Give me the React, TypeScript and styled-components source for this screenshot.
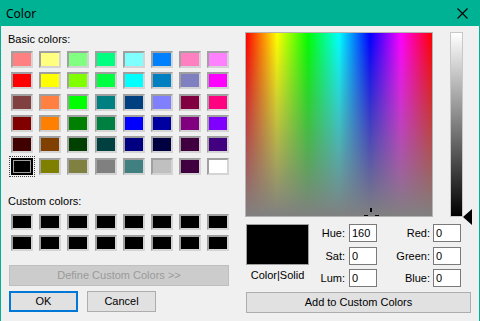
import React from 'react';
import styled, { createGlobalStyle } from 'styled-components';

const GlobalStyle = createGlobalStyle`
  html, body { margin: 0; padding: 0; background: #f0f0f0; }
  body { font-family: "Liberation Sans", Arial, sans-serif; font-size: 11px; color: #000; }
  * { box-sizing: border-box; }
`;

const basicColors = [
  '#FF8080', '#FFFF80', '#80FF80', '#00FF80', '#80FFFF', '#0080FF', '#FF80C0', '#FF80FF',
  '#FF0000', '#FFFF00', '#80FF00', '#00FF40', '#00FFFF', '#0080C0', '#8080C0', '#FF00FF',
  '#804040', '#FF8040', '#00FF00', '#008080', '#004080', '#8080FF', '#800040', '#FF0080',
  '#800000', '#FF8000', '#008000', '#008040', '#0000FF', '#0000A0', '#800080', '#8000FF',
  '#400000', '#804000', '#004000', '#004040', '#000080', '#000040', '#400040', '#400080',
  '#000000', '#808000', '#808040', '#808080', '#408080', '#C0C0C0', '#400040', '#FFFFFF',
];

const fields = [
  { label: 'Hue:', value: '160', label2: 'Red:', value2: '0' },
  { label: 'Sat:', value: '0', label2: 'Green:', value2: '0' },
  { label: 'Lum:', value: '0', label2: 'Blue:', value2: '0' },
];

const App: React.FC = () => {
  return (
    <>
      <GlobalStyle />
      <Window>
        <TitleBar>
          <Title>Color</Title>
          <CloseIcon width="11" height="11" viewBox="0 0 11 11">
            <path d="M0.5 0.5 L10.5 10.5 M10.5 0.5 L0.5 10.5" stroke="#000" strokeWidth="1.1" fill="none" />
          </CloseIcon>
        </TitleBar>
        <Body>
          <LeftPane>
            <SectionLabel>Basic colors:</SectionLabel>
            <BasicGrid>
              {basicColors.map((c, idx) => (
                <Swatch key={idx} $color={c} $selected={idx === 40} />
              ))}
            </BasicGrid>
            <SectionLabel $top={20}>Custom colors:</SectionLabel>
            <CustomGrid>
              {Array.from({ length: 16 }).map((_, idx) => (
                <Swatch key={idx} $color="#000000" />
              ))}
            </CustomGrid>
            <WideButton disabled>Define Custom Colors &gt;&gt;</WideButton>
            <ButtonRow>
              <Button $primary>OK</Button>
              <Button>Cancel</Button>
            </ButtonRow>
          </LeftPane>
          <RightPane>
            <TopRow>
              <Spectrum>
                <Cross width="20" height="20" viewBox="0 0 20 20">
                  <rect x="9" y="2" width="2" height="4" fill="#000" />
                  <rect x="3" y="9" width="4" height="2" fill="#000" />
                  <rect x="14" y="9" width="4" height="2" fill="#000" />
                </Cross>
              </Spectrum>
              <LumWrap>
                <LumBar />
                <Arrow width="9" height="16" viewBox="0 0 9 16">
                  <polygon points="0,8 9,0 9,16" fill="#000" />
                </Arrow>
              </LumWrap>
            </TopRow>
            <BottomRow>
              <SolidCol>
                <SolidBox />
                <SolidLabel>Color|Solid</SolidLabel>
              </SolidCol>
              <FieldGrid>
                {fields.map((f) => (
                  <React.Fragment key={f.label}>
                    <FieldLabel>{f.label}</FieldLabel>
                    <Field>{f.value}</Field>
                    <FieldLabel $pad={3}>{f.label2}</FieldLabel>
                    <Field>{f.value2}</Field>
                  </React.Fragment>
                ))}
              </FieldGrid>
            </BottomRow>
            <AddButton>Add to Custom Colors</AddButton>
          </RightPane>
        </Body>
      </Window>
    </>
  );
};

export default App;

const Window = styled.div`
  width: 480px;
  height: 321px;
  background: #f0f0f0;
  border: 1px solid #00b294;
  border-bottom: none;
  display: flex;
  flex-direction: column;
`;

const TitleBar = styled.div`
  height: 25px;
  background: #00b294;
  display: flex;
  align-items: center;
  justify-content: space-between;
  padding: 0 10px 0 5px;
`;

const Title = styled.div`
  font-family: "Noto Sans", "Open Sans", sans-serif;
  font-size: 12px;
  color: #000;
`;

const CloseIcon = styled.svg`
  display: block;
  margin-right: 1px;
`;

const Body = styled.div`
  display: flex;
  padding-left: 7px;
`;

const LeftPane = styled.div`
  width: 222px;
  display: flex;
  flex-direction: column;
  padding-top: 7px;
`;

const SectionLabel = styled.div<{ $top?: number }>`
  height: 13px;
  line-height: 13px;
  margin-top: ${(p) => p.$top ?? 0}px;
`;

const BasicGrid = styled.div`
  display: grid;
  grid-template-columns: repeat(8, 22px);
  grid-auto-rows: 17px;
  column-gap: 6px;
  row-gap: 4.33px;
  margin: 5px 0 0 3px;
`;

const CustomGrid = styled.div`
  display: grid;
  grid-template-columns: repeat(8, 22px);
  grid-auto-rows: 16px;
  column-gap: 6px;
  row-gap: 5.33px;
  margin: 6px 0 0 3px;
`;

const Swatch = styled.div<{ $color: string; $selected?: boolean }>`
  background: ${(p) => p.$color};
  border: 2px solid;
  border-color: ${(p) => (p.$selected ? '#000' : '#a0a0a0 #d4d4d4 #d4d4d4 #a0a0a0')};
  box-shadow: ${(p) => (p.$selected ? 'inset 0 0 0 1px #a0a0a0' : 'none')};
  outline: ${(p) => (p.$selected ? '1px dotted #404040' : 'none')};
  outline-offset: 1px;
`;

const BaseButton = styled.button`
  font-family: "Liberation Sans", Arial, sans-serif;
  font-size: 11px;
  height: 21px;
  padding: 0;
  background: #e1e1e1;
  border: 1px solid #adadad;
  color: #000;
`;

const WideButton = styled(BaseButton)`
  width: 220px;
  margin: 14px 0 0 1px;
  background: #cccccc;
  border-color: #bfbfbf;
  color: #9a9a9a;
`;

const ButtonRow = styled.div`
  display: flex;
  gap: 9px;
  margin: 5px 0 0 1px;
`;

const Button = styled(BaseButton)<{ $primary?: boolean }>`
  width: 69px;
  border: ${(p) => (p.$primary ? '2px solid #0078d7' : '1px solid #adadad')};
`;

const RightPane = styled.div`
  width: 226px;
  margin-left: 15px;
  padding-top: 6px;
  display: flex;
  flex-direction: column;
`;

const TopRow = styled.div`
  display: flex;
  align-items: flex-start;
`;

const Spectrum = styled.div`
  position: relative;
  width: 188px;
  height: 185px;
  border: 1px solid #b4b4b4;
  overflow: hidden;
  background:
    linear-gradient(to bottom, rgba(128, 128, 128, 0), #808080),
    linear-gradient(to right, #ff0000 0%, #ffff00 16.67%, #00ff00 33.33%, #00ffff 50%, #0000ff 66.67%, #ff00ff 83.33%, #ff0000 100%);
`;

const Cross = styled.svg`
  position: absolute;
  left: 115px;
  top: 173px;
`;

const LumWrap = styled.div`
  position: relative;
  margin-left: 17px;
`;

const LumBar = styled.div`
  width: 13px;
  height: 185px;
  border: 1px solid #c8c8c8;
  background: linear-gradient(to bottom, #ffffff, #000000);
`;

const Arrow = styled.svg`
  position: absolute;
  left: 13px;
  top: 177px;
`;

const BottomRow = styled.div`
  display: flex;
  margin-top: 7px;
`;

const SolidCol = styled.div`
  width: 63px;
  margin-left: 1px;
  display: flex;
  flex-direction: column;
  align-items: center;
`;

const SolidBox = styled.div`
  width: 63px;
  height: 41px;
  background: #000;
  border: 1px solid #a0a0a0;
`;

const SolidLabel = styled.div`
  margin-top: 4px;
  line-height: 13px;
`;

const FieldGrid = styled.div`
  display: grid;
  grid-template-columns: 36px 28px 56px 28px;
  grid-auto-rows: 18px;
  row-gap: 4.67px;
  margin-left: 4px;
`;

const FieldLabel = styled.div<{ $pad?: number }>`
  display: flex;
  align-items: center;
  justify-content: flex-end;
  padding-right: ${(p) => p.$pad ?? 4}px;
`;

const Field = styled.div`
  background: #fff;
  border: 1px solid #7a7a7a;
  padding-left: 2px;
  line-height: 16px;
`;

const AddButton = styled(BaseButton)`
  width: 225px;
  margin: 4.5px 0 0 1px;
`;
